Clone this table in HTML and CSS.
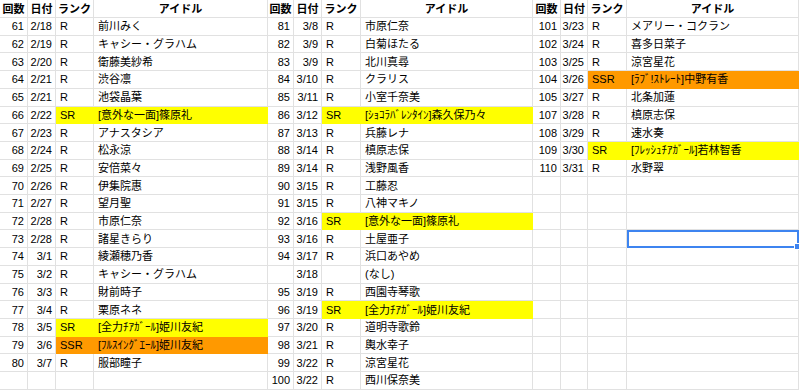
FILE: index.html
```html
<!DOCTYPE html>
<html lang="ja">
<head>
<meta charset="utf-8">
<title>ガシャ記録</title>
<link rel="stylesheet" href="styles.css">
</head>
<body>
<table class="sheet">
  <colgroup>
    <col class="c-no"><col class="c-date"><col class="c-rank"><col class="c-name1">
    <col class="c-no2"><col class="c-date"><col class="c-rank2"><col class="c-name2">
    <col class="c-no"><col class="c-date3"><col class="c-rank2"><col class="c-name3">
  </colgroup>
  <thead>
    <tr class="head">
      <th>回数</th><th>日付</th><th>ランク</th><th>アイドル</th>
      <th>回数</th><th>日付</th><th>ランク</th><th>アイドル</th>
      <th>回数</th><th>日付</th><th>ランク</th><th>アイドル</th>
    </tr>
  </thead>
  <tbody>
    <tr>
      <td class="num">61</td><td class="num">2/18</td><td class="txt">R</td><td class="txt">前川みく</td>
      <td class="num">81</td><td class="num">3/8</td><td class="txt">R</td><td class="txt">市原仁奈</td>
      <td class="num">101</td><td class="num">3/23</td><td class="txt">R</td><td class="txt">メアリー・コクラン</td>
    </tr>
    <tr>
      <td class="num">62</td><td class="num">2/19</td><td class="txt">R</td><td class="txt">キャシー・グラハム</td>
      <td class="num">82</td><td class="num">3/9</td><td class="txt">R</td><td class="txt">白菊ほたる</td>
      <td class="num">102</td><td class="num">3/24</td><td class="txt">R</td><td class="txt">喜多日菜子</td>
    </tr>
    <tr>
      <td class="num">63</td><td class="num">2/20</td><td class="txt">R</td><td class="txt">衛藤美紗希</td>
      <td class="num">83</td><td class="num">3/9</td><td class="txt">R</td><td class="txt">北川真尋</td>
      <td class="num">103</td><td class="num">3/25</td><td class="txt">R</td><td class="txt">涼宮星花</td>
    </tr>
    <tr>
      <td class="num">64</td><td class="num">2/21</td><td class="txt">R</td><td class="txt">渋谷凛</td>
      <td class="num">84</td><td class="num">3/10</td><td class="txt">R</td><td class="txt">クラリス</td>
      <td class="num">104</td><td class="num">3/26</td><td class="txt ssr">SSR</td><td class="txt ssr">[ﾗﾌﾞ!ｽﾄﾚｰﾄ]中野有香</td>
    </tr>
    <tr>
      <td class="num">65</td><td class="num">2/21</td><td class="txt">R</td><td class="txt">池袋晶葉</td>
      <td class="num">85</td><td class="num">3/11</td><td class="txt">R</td><td class="txt">小室千奈美</td>
      <td class="num">105</td><td class="num">3/27</td><td class="txt">R</td><td class="txt">北条加蓮</td>
    </tr>
    <tr>
      <td class="num">66</td><td class="num">2/22</td><td class="txt sr">SR</td><td class="txt sr">[意外な一面]篠原礼</td>
      <td class="num">86</td><td class="num">3/12</td><td class="txt sr">SR</td><td class="txt sr">[ｼｮｺﾗﾊﾞﾚﾝﾀｲﾝ]森久保乃々</td>
      <td class="num">107</td><td class="num">3/28</td><td class="txt">R</td><td class="txt">槙原志保</td>
    </tr>
    <tr>
      <td class="num">67</td><td class="num">2/23</td><td class="txt">R</td><td class="txt">アナスタシア</td>
      <td class="num">87</td><td class="num">3/13</td><td class="txt">R</td><td class="txt">兵藤レナ</td>
      <td class="num">108</td><td class="num">3/29</td><td class="txt">R</td><td class="txt">速水奏</td>
    </tr>
    <tr>
      <td class="num">68</td><td class="num">2/24</td><td class="txt">R</td><td class="txt">松永涼</td>
      <td class="num">88</td><td class="num">3/14</td><td class="txt">R</td><td class="txt">槙原志保</td>
      <td class="num">109</td><td class="num">3/30</td><td class="txt sr">SR</td><td class="txt sr">[ﾌﾚｯｼｭﾁｱｶﾞｰﾙ]若林智香</td>
    </tr>
    <tr>
      <td class="num">69</td><td class="num">2/25</td><td class="txt">R</td><td class="txt">安倍菜々</td>
      <td class="num">89</td><td class="num">3/14</td><td class="txt">R</td><td class="txt">浅野風香</td>
      <td class="num">110</td><td class="num">3/31</td><td class="txt">R</td><td class="txt">水野翠</td>
    </tr>
    <tr>
      <td class="num">70</td><td class="num">2/26</td><td class="txt">R</td><td class="txt">伊集院惠</td>
      <td class="num">90</td><td class="num">3/15</td><td class="txt">R</td><td class="txt">工藤忍</td>
      <td></td><td></td><td></td><td></td>
    </tr>
    <tr>
      <td class="num">71</td><td class="num">2/27</td><td class="txt">R</td><td class="txt">望月聖</td>
      <td class="num">91</td><td class="num">3/15</td><td class="txt">R</td><td class="txt">八神マキノ</td>
      <td></td><td></td><td></td><td></td>
    </tr>
    <tr>
      <td class="num">72</td><td class="num">2/28</td><td class="txt">R</td><td class="txt">市原仁奈</td>
      <td class="num">92</td><td class="num">3/16</td><td class="txt sr">SR</td><td class="txt sr">[意外な一面]篠原礼</td>
      <td></td><td></td><td></td><td></td>
    </tr>
    <tr>
      <td class="num">73</td><td class="num">2/28</td><td class="txt">R</td><td class="txt">諸星きらり</td>
      <td class="num">93</td><td class="num">3/16</td><td class="txt">R</td><td class="txt">土屋亜子</td>
      <td></td><td></td><td></td><td class="sel"></td>
    </tr>
    <tr>
      <td class="num">74</td><td class="num">3/1</td><td class="txt">R</td><td class="txt">綾瀬穂乃香</td>
      <td class="num">94</td><td class="num">3/17</td><td class="txt">R</td><td class="txt">浜口あやめ</td>
      <td></td><td></td><td></td><td></td>
    </tr>
    <tr>
      <td class="num">75</td><td class="num">3/2</td><td class="txt">R</td><td class="txt">キャシー・グラハム</td>
      <td class="num"></td><td class="num">3/18</td><td class="txt"></td><td class="txt">(なし)</td>
      <td></td><td></td><td></td><td></td>
    </tr>
    <tr>
      <td class="num">76</td><td class="num">3/3</td><td class="txt">R</td><td class="txt">財前時子</td>
      <td class="num">95</td><td class="num">3/19</td><td class="txt">R</td><td class="txt">西園寺琴歌</td>
      <td></td><td></td><td></td><td></td>
    </tr>
    <tr>
      <td class="num">77</td><td class="num">3/4</td><td class="txt">R</td><td class="txt">栗原ネネ</td>
      <td class="num">96</td><td class="num">3/19</td><td class="txt sr">SR</td><td class="txt sr">[全力ﾁｱｶﾞｰﾙ]姫川友紀</td>
      <td></td><td></td><td></td><td></td>
    </tr>
    <tr>
      <td class="num">78</td><td class="num">3/5</td><td class="txt sr">SR</td><td class="txt sr">[全力ﾁｱｶﾞｰﾙ]姫川友紀</td>
      <td class="num">97</td><td class="num">3/20</td><td class="txt">R</td><td class="txt">道明寺歌鈴</td>
      <td></td><td></td><td></td><td></td>
    </tr>
    <tr>
      <td class="num">79</td><td class="num">3/6</td><td class="txt ssr">SSR</td><td class="txt ssr">[ﾌﾙｽｲﾝｸﾞｴｰﾙ]姫川友紀</td>
      <td class="num">98</td><td class="num">3/21</td><td class="txt">R</td><td class="txt">輿水幸子</td>
      <td></td><td></td><td></td><td></td>
    </tr>
    <tr>
      <td class="num">80</td><td class="num">3/7</td><td class="txt">R</td><td class="txt">服部瞳子</td>
      <td class="num">99</td><td class="num">3/22</td><td class="txt">R</td><td class="txt">涼宮星花</td>
      <td></td><td></td><td></td><td></td>
    </tr>
    <tr>
      <td></td><td></td><td></td><td></td>
      <td class="num">100</td><td class="num">3/22</td><td class="txt">R</td><td class="txt">西川保奈美</td>
      <td></td><td></td><td></td><td></td>
    </tr>
  </tbody>
</table>
</body>
</html>
```

FILE: styles.css
```css
html, body {
  margin: 0;
  padding: 0;
  background: #ffffff;
  overflow: hidden;
}

.sheet {
  table-layout: fixed;
  border-collapse: separate;
  border-spacing: 0;
  width: 799px;
  font-family: "Liberation Sans", "Noto Sans CJK JP", sans-serif;
  font-size: 11px;
  color: #000000;
}

.c-no { width: 28px; }
.c-no2 { width: 26px; }
.c-date { width: 28px; }
.c-date3 { width: 27px; }
.c-rank { width: 38px; }
.c-rank2 { width: 39px; }
.c-name1 { width: 174px; }
.c-name2 { width: 172px; }
.c-name3 { width: 172px; }

.sheet th,
.sheet td {
  border-right: 1px solid #e1e1e1;
  border-bottom: 1px solid #e1e1e1;
  padding: 0;
  white-space: nowrap;
  overflow: hidden;
  vertical-align: middle;
  line-height: 14px;
}

.head th {
  height: 17px;
  font-weight: bold;
  text-align: center;
}

.sheet tbody tr {
  height: 17.71px;
}

.num {
  text-align: right;
  padding-right: 3px !important;
}

.txt {
  text-align: left;
  padding-left: 4px !important;
}

.sr {
  background: #ffff00;
  border-color: #ffff00 !important;
}

.ssr {
  background: #ff9900;
  border-color: #ff9900 !important;
}

.sel {
  position: relative;
  overflow: visible !important;
  outline: 2px solid #3d84f0;
  outline-offset: -2px;
}

.sel::after {
  content: "";
  position: absolute;
  right: -3px;
  bottom: -3px;
  width: 5px;
  height: 5px;
  background: #3d84f0;
  border: 1px solid #ffffff;
}
```
